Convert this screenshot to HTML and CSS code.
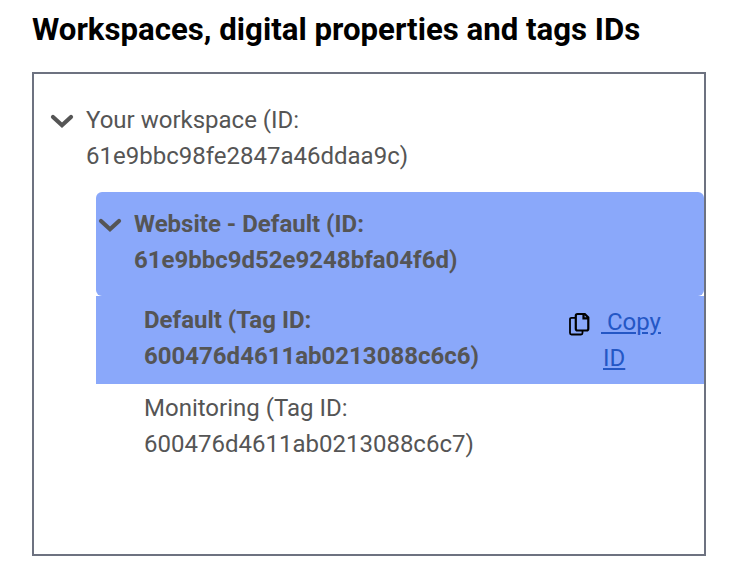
FILE: index.html
```html
<!DOCTYPE html>
<html lang="en">
<head>
    <meta charset="UTF-8">
    <meta name="viewport" content="width=device-width, initial-scale=1.0">
    <title>Workspaces</title>
    <link rel="stylesheet" href="styles.css">
</head>
<body>
    <h1>Workspaces, digital properties and tags IDs</h1>

    <div class="tree">
        <div class="workspace">
            <svg class="chevron" viewBox="0 0 24 16"><path d="M3 3 L12 11.2 L21 3"/></svg>
            <span>Your workspace (ID:<br>61e9bbc98fe2847a46ddaa9c)</span>
        </div>

        <div class="property">
            <svg class="chevron" viewBox="0 0 24 16"><path d="M3 3 L12 11.2 L21 3"/></svg>
            <span>Website - Default (ID:<br>61e9bbc9d52e9248bfa04f6d)</span>
        </div>

        <div class="tag selected">
            <span class="tag-name">Default (Tag ID:<br>600476d4611ab0213088c6c6)</span>
            <svg class="copy-icon" viewBox="0 0 22 24">
                <path class="back" d="M7 5.8 H3.5 Q2 5.8 2 7.3 V21 Q2 22.5 3.5 22.5 H13 Q14.5 22.5 14.5 21 V19"/>
                <path d="M9.5 2 H16.8 L20.3 5.5 V16.8 Q20.3 18.5 18.6 18.5 H9.5 Q7.8 18.5 7.8 16.8 V3.7 Q7.8 2 9.5 2 Z M15.5 2 V6.4 H20"/>
            </svg>
            <a class="copy-link" href="#">&nbsp;Copy<br>ID</a>
        </div>

        <div class="tag">
            <span class="tag-name">Monitoring (Tag ID:<br>600476d4611ab0213088c6c7)</span>
        </div>
    </div>
</body>
</html>
```
FILE: styles.css
```css
body {
    margin: 0;
    padding: 12px 26px 0 32px;
    background-color: #fff;
    font-family: Roboto, sans-serif;
    font-size: 24px;
    line-height: 36px;
    color: #555;
}

h1 {
    margin: 0 0 24px;
    font-size: 31.2px;
    line-height: 36px;
    color: #000;
    white-space: nowrap;
}

.tree {
    box-sizing: border-box;
    height: 484px;
    padding-top: 28px;
    border: 2px solid #6d7280;
}

.workspace {
    display: flex;
    padding: 0 0 18px 16px;
}

.chevron {
    flex: none;
    width: 24px;
    height: 16px;
    margin: 12px 12px 0 0;
    fill: none;
    stroke: #555;
    stroke-width: 4.2;
    stroke-linecap: round;
}

.property {
    display: flex;
    height: 90px;
    margin-left: 62px;
    padding: 14px 0 0 2px;
    border-radius: 6px;
    background-color: #8aa8fa;
    font-weight: bold;
}

.tag {
    display: flex;
    height: 80px;
    margin-left: 62px;
    padding: 6px 0 0 48px;
}

.selected {
    height: 82px;
    background-color: #8aa8fa;
    font-weight: bold;
}

.tag-name {
    width: 424px;
}

.copy-icon {
    width: 22px;
    height: 24px;
    margin: 10px 13px 0 0;
    fill: none;
    stroke: #000;
    stroke-width: 2.2;
}

.copy-icon .back {
    stroke-width: 1.8;
}

.copy-link {
    padding-top: 2px;
    text-indent: -2px;
    color: #2457c5;
    font-weight: normal;
}
```
